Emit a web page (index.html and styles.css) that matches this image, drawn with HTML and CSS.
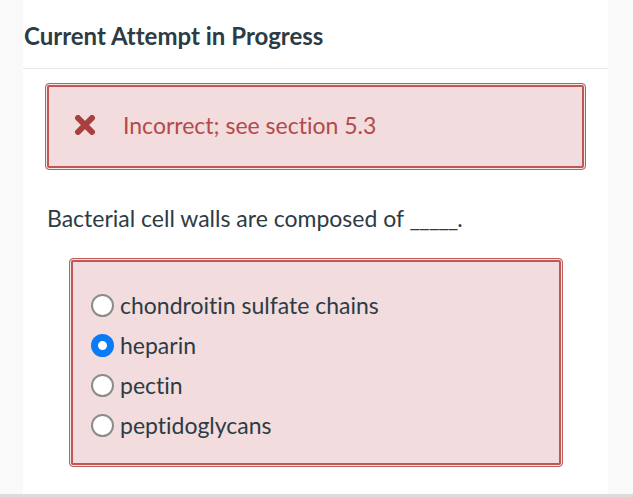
FILE: index.html
```html
<!DOCTYPE html>
<html>
<head>
<meta charset="utf-8">
<link rel="stylesheet" href="styles.css">
</head>
<body>
<div class="page">
  <main class="main">
    <div class="head">
      <h1 class="title">Current Attempt in Progress</h1>
    </div>
    <div class="alert">
      <svg class="xicon" width="22" height="20" viewBox="0 0 22 20">
        <path d="M4 3 L18 17 M18 3 L4 17" stroke="#a8403f" stroke-width="6" stroke-linecap="round"/>
      </svg>
      <span class="alert-text">Incorrect; see section 5.3</span>
    </div>
    <p class="question">Bacterial cell walls are composed of <span class="blank">_____</span>.</p>
    <div class="answers">
      <label class="opt"><span class="radio"></span><span class="opt-text">chondroitin sulfate chains</span></label>
      <label class="opt"><span class="radio checked"></span><span class="opt-text">heparin</span></label>
      <label class="opt"><span class="radio"></span><span class="opt-text">pectin</span></label>
      <label class="opt"><span class="radio"></span><span class="opt-text">peptidoglycans</span></label>
    </div>
  </main>
  <div class="foot"></div>
</div>
</body>
</html>
```
FILE: styles.css
```css
html, body {
  margin: 0;
  padding: 0;
}
body {
  background: #f9f9f9;
  font-family: Lato, "Noto Sans", sans-serif;
  font-variant-ligatures: none;
  color: #2d3b45;
  width: 633px;
  height: 497px;
  overflow: hidden;
}
.page {
  display: flex;
  flex-direction: column;
}
.main {
  margin-left: 23px;
  width: 585px;
  height: 494px;
  background: #ffffff;
  box-sizing: border-box;
  display: flex;
  flex-direction: column;
}
.head {
  height: 69px;
  box-sizing: border-box;
  border-bottom: 1px solid #e8e8e8;
  padding: 21px 0 0 1px;
}
.title {
  margin: 0;
  font-size: 24px;
  font-weight: 700;
  line-height: 30px;
  color: #2d3b45;
}
.alert {
  margin: 14px 22px 0 22px;
  height: 87px;
  box-sizing: border-box;
  background: #f2dcdd;
  border: 1px solid #c35a5a;
  border-radius: 4px;
  box-shadow: inset 0 0 0 1px #f7e8e8, inset 0 0 0 3px #c05757;
  display: flex;
  align-items: center;
  padding: 0 0 4px 28px;
}
.xicon {
  flex: none;
  margin-right: 27px;
}
.alert-text {
  font-size: 23px;
  color: #b24a4b;
}
.question {
  margin: 33px 0 0 24px;
  font-size: 23px;
  line-height: 30px;
  color: #2d3b45;
}
.blank {
  letter-spacing: -1px;
}
.answers {
  margin: 25px 0 0 46px;
  width: 494px;
  height: 209px;
  box-sizing: border-box;
  background: #f2dcdd;
  border: 1px solid #c35a5a;
  border-radius: 4px;
  box-shadow: inset 0 0 0 1px #f7e8e8, inset 0 0 0 3px #c05757;
  padding: 26px 0 0 21px;
  display: flex;
  flex-direction: column;
}
.opt {
  display: flex;
  align-items: center;
  height: 40px;
}
.radio {
  flex: none;
  width: 23px;
  height: 23px;
  box-sizing: border-box;
  border-radius: 50%;
  border: 2px solid #8c8c8c;
  background: #ffffff;
  margin-right: 6px;
}
.radio.checked {
  border: 7px solid #0b7af5;
  background: #ffffff;
}
.opt-text {
  font-size: 23px;
  color: #2d3b45;
}
.foot {
  height: 3px;
  background: #dcdcdc;
}
```
